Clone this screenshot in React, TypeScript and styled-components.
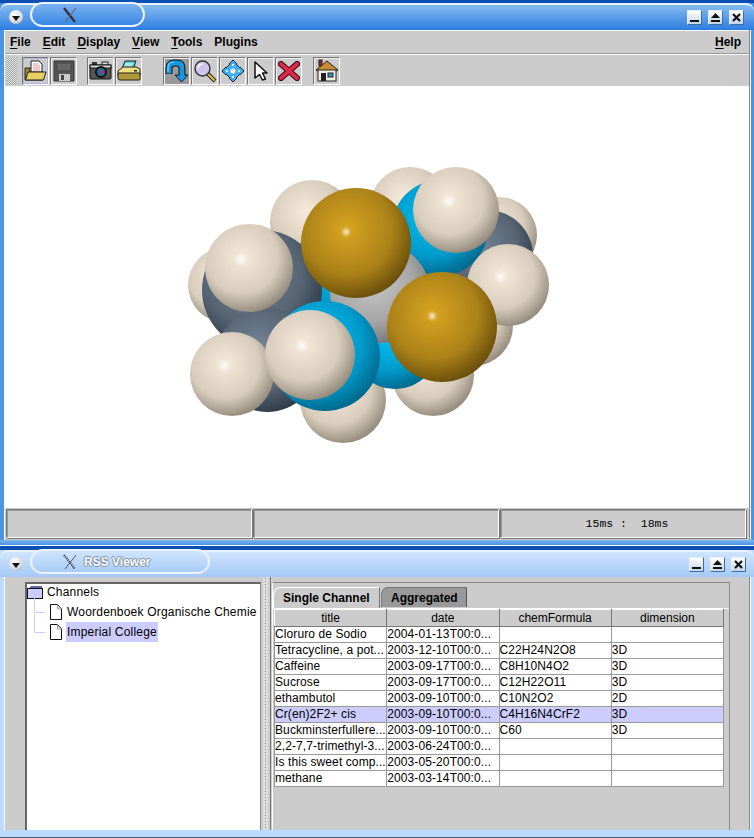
import React from "react";
import styled, { createGlobalStyle } from "styled-components";

const Global = createGlobalStyle`
  html, body { margin: 0; padding: 0; width: 754px; height: 838px; overflow: hidden; background: #1a60c8; }
  * { box-sizing: border-box; }
`;

const Page = styled.div`
  width: 754px;
  height: 838px;
  display: flex;
  flex-direction: column;
  font-family: "Liberation Sans", Arial, sans-serif;
  color: #000;
`;

const Win = styled.div<{ $active?: boolean; $h: number }>`
  height: ${(p) => p.$h}px;
  flex: none;
  display: flex;
  flex-direction: column;
  background: ${(p) => (p.$active ? "#4a94e8" : "#bcdcff")};
  border-top: ${(p) => (p.$active ? 3 : 4)}px solid #0a50b4;
`;

const TitleBar = styled.div<{ $active?: boolean }>`
  height: 27px;
  flex: none;
  display: flex;
  align-items: center;
  padding: 0 ${(p) => (p.$active ? 10 : 8)}px 1px 9px;
  gap: 7px;
  border-top: 2px solid #e8f2fd;
  border-radius: 8px 8px 0 0;
  background: ${(p) =>
    p.$active
      ? "linear-gradient(#86bbf1, #2c7de0)"
      : "linear-gradient(#cfe5fe, #a5c9f4)"};
`;

const MenuDot = styled.div`
  width: 14px;
  height: 14px;
  border-radius: 50%;
  flex: none;
  display: flex;
  align-items: center;
  justify-content: center;
  background: radial-gradient(circle at 40% 30%, #fff, #d8d8e0 60%, #8890a0);
  &::after {
    content: "";
    border-left: 4px solid transparent;
    border-right: 4px solid transparent;
    border-top: 5px solid #111;
    margin-top: 2px;
  }
`;

const TitlePill = styled.div<{ $active?: boolean; $w: number }>`
  width: ${(p) => p.$w}px;
  height: 25px;
  margin-top: -5px;
  flex: none;
  display: flex;
  align-items: center;
  gap: 6px;
  padding-left: 30px;
  border: 2px solid #eaf3fe;
  border-radius: 13px;
  background: ${(p) =>
    p.$active
      ? "linear-gradient(#7ab2f0, #3a88e6)"
      : "linear-gradient(#cfe5fe, #a9ccf6)"};
`;

const TitleText = styled.span`
  font-size: 12px;
  font-weight: bold;
  color: #fff;
  text-shadow: 1px 0 #7d93ad, 0 1px #7d93ad, -1px 0 #7d93ad, 0 -1px #7d93ad;
`;

const WinButtons = styled.div`
  margin-left: auto;
  display: flex;
  gap: 6px;
`;

const WinButton = styled.div`
  width: 15px;
  height: 15px;
  display: flex;
  align-items: center;
  justify-content: center;
  background: linear-gradient(#fff, #c4d4e8);
  border: 1px solid #3c6ea8;
  border-top-color: #e8f0fa;
  border-left-color: #e8f0fa;
`;

const Body = styled.div`
  flex: 1;
  min-height: 0;
  display: flex;
  flex-direction: column;
  margin: 0 4px 0 4px;
  background: #ccc;
  border-left: 1px solid #fff;
  border-right: 1px solid #888;
  box-shadow: 1px 0 #fff;
`;

const MenuBar = styled.div`
  height: 24px;
  flex: none;
  display: flex;
  align-items: center;
  padding: 0 8px 0 5px;
  gap: 12px;
  border-top: 1px solid #fff;
  border-bottom: 1px solid #999;
`;

const MenuItem = styled.span<{ $right?: boolean }>`
  font-size: 12px;
  font-weight: bold;
  margin-left: ${(p) => (p.$right ? "auto" : 0)};
  u { text-underline-offset: 2px; }
`;

const ToolBar = styled.div`
  height: 32px;
  flex: none;
  display: flex;
  align-items: center;
  padding-left: 2px;
  border-top: 1px solid #fff;
`;

const Grip = styled.div`
  width: 10px;
  height: 28px;
  margin-right: 5px;
  flex: none;
  background: repeating-conic-gradient(#a4a4a4 0 25%, #e4e4e4 0 50%) 0 0 / 2px 2px;
`;

const ToolGroup = styled.div<{ $after: number }>`
  display: flex;
  gap: 1px;
  margin-right: ${(p) => p.$after}px;
`;

const ToolButton = styled.div<{ $pressed?: boolean; $focus?: boolean }>`
  width: 27px;
  height: 28px;
  flex: none;
  display: flex;
  align-items: center;
  justify-content: center;
  background: ${(p) => (p.$pressed ? "#999" : "#ccc")};
  border: 1px solid #777;
  border-right-color: #fff;
  border-bottom-color: #fff;
  box-shadow: ${(p) => (p.$focus ? "inset 0 0 0 1px #b4b4e0" : "inset 1px 1px #eee")};
`;

const Canvas = styled.div`
  flex: 1;
  min-height: 0;
  background: #fff;
  display: flex;
  align-items: flex-start;
  justify-content: center;
  overflow: hidden;
`;

const StatusBar = styled.div`
  height: 32px;
  flex: none;
  display: grid;
  grid-template-columns: 246px 246px 246px;
  gap: 1px;
  padding: 1px 0 2px 1px;
`;

const StatusCell = styled.div`
  border: 1px solid #777;
  border-right-color: #fff;
  border-bottom-color: #fff;
  box-shadow: inset 1px 1px #999, 1px 1px #777;
  display: flex;
  align-items: center;
  justify-content: center;
  font-family: "Liberation Mono", monospace;
  font-size: 11.5px;
  white-space: pre;
  padding-left: 8px;
`;

const Split = styled.div`
  flex: 1;
  min-height: 0;
  display: flex;
  padding-left: 20px;
  padding-top: 5px;
`;

const Tree = styled.div`
  width: 236px;
  flex: none;
  background: #fff;
  border: 2px solid #666;
  border-right: 1px solid #888;
  border-bottom: none;
  font-size: 12px;
`;

const TreeRow = styled.div<{ $depth: number }>`
  height: 20px;
  display: flex;
  align-items: center;
  gap: 3px;
  padding-left: ${(p) => p.$depth}px;
  position: relative;
  &:first-child { margin-top: -2px; }
  svg { flex: none; }
`;

const TreeLine = styled.div`
  position: absolute;
  left: 7px;
  top: -8px;
  width: 11px;
  height: 19px;
  border-left: 1px solid #ccf;
  border-bottom: 1px solid #ccf;
`;

const TreeLabel = styled.span<{ $selected?: boolean }>`
  padding: 3px 1px;
  letter-spacing: 0.2px;
  background: ${(p) => (p.$selected ? "#ccccff" : "transparent")};
  white-space: nowrap;
`;

const Splitter = styled.div`
  width: 10px;
  flex: none;
  margin: -5px 0 0 0;
  border-right: 1px solid #777;
  background-image: radial-gradient(#888 0.7px, #ddd 0.8px);
  background-size: 3px 3px;
  background-clip: content-box;
  padding: 0 2px;
`;

const TabArea = styled.div`
  width: 458px;
  flex: none;
  margin-left: 1px;
  border-top: 1px solid #888;
  border-left: 1px solid #fff;
  border-right: 1px solid #888;
  padding-top: 4px;
  display: flex;
  flex-direction: column;
`;

const Tabs = styled.div`
  display: flex;
  height: 21px;
  flex: none;
  gap: 1px;
`;

const Tab = styled.div<{ $active?: boolean }>`
  height: ${(p) => (p.$active ? 21 : 20)}px;
  width: ${(p) => (p.$active ? 107 : 86)}px;
  padding: 2px 0 0 9px;
  font-size: 12px;
  font-weight: bold;
  line-height: 16px;
  white-space: nowrap;
  background: ${(p) => (p.$active ? "#ccc" : "#999")};
  border-top: 1px solid ${(p) => (p.$active ? "#fff" : "#777")};
  border-left: 1px solid ${(p) => (p.$active ? "#fff" : "#777")};
  border-right: 1px solid ${(p) => (p.$active ? "#777" : "#555")};
  border-top-left-radius: 7px 8px;
`;

const TablePane = styled.div`
  flex: 1;
  min-height: 0;
  border-top: 1px solid #fff;
  padding: 0 3px 0 1px;
`;

const Table = styled.table`
  border-collapse: collapse;
  table-layout: fixed;
  width: 450px;
  font-size: 12px;
  letter-spacing: 0.1px;
`;

const Th = styled.th`
  height: 17px;
  padding: 0;
  background: #ccc;
  font-weight: normal;
  text-align: center;
  letter-spacing: 0;
  border-top: 1px solid #fff;
  border-left: 1px solid #fff;
  border-right: 1px solid #777;
  border-bottom: 1px solid #777;
`;

const Td = styled.td<{ $selected?: boolean }>`
  height: 16px;
  padding: 0;
  background: ${(p) => (p.$selected ? "#ccccff" : "#fff")};
  border: 1px solid #999;
  white-space: nowrap;
  overflow: hidden;
  line-height: 13px;
`;

const BottomBand = styled.div<{ $active?: boolean }>`
  height: ${(p) => (p.$active ? 6 : 8)}px;
  flex: none;
  background: ${(p) => (p.$active ? "linear-gradient(#7ab4f0, #4a94e8)" : "#bcdcff")};
  border-bottom: 1px solid ${(p) => (p.$active ? "#fff" : "#46586c")};
`;

const Minimize = () => (
  <svg width="11" height="11" viewBox="0 0 11 11"><rect x="1" y="8" width="9" height="2" fill="#111" /></svg>
);
const Maximize = () => (
  <svg width="11" height="11" viewBox="0 0 11 11"><path d="M5.5 1 L10 6 H1 Z" fill="#111" /><rect x="1" y="8" width="9" height="2" fill="#111" /></svg>
);
const CloseX = () => (
  <svg width="11" height="11" viewBox="0 0 11 11"><path d="M2 2 L9 9 M9 2 L2 9" stroke="#111" strokeWidth="2.2" /></svg>
);

const XLogo = ({ hatch }: { hatch?: boolean }) => (
  <svg width="16" height="16" viewBox="0 0 16 16">
    <path d="M2 1 L13 15" stroke={hatch ? "#222" : "#333"} strokeWidth={hatch ? 2 : 2.4} strokeDasharray={hatch ? "1 1" : undefined} fill="none" />
    <path d="M14 1 L3 15" stroke={hatch ? "#555" : "#666"} strokeWidth={hatch ? 1 : 1.2} fill="none" />
  </svg>
);

const OpenIcon = () => (
  <svg width="23" height="22" viewBox="0 0 23 22">
    <path d="M7 1 H15 L18 4 V13 H7 Z" fill="#fff" stroke="#222" />
    <path d="M9 4h5M9 6h7M9 8h7M9 10h7" stroke="#e89090" />
    <path d="M1 8 H6 V12 H19 V20 H1 Z" fill="#a08828" stroke="#222" />
    <path d="M1.5 20 L4 12 H22 L19.5 20 Z" fill="#e6cf60" stroke="#222" />
  </svg>
);
const SaveIcon = () => (
  <svg width="22" height="22" viewBox="0 0 22 22">
    <path d="M1 1 H21 V21 H1 Z" fill="#555" stroke="#333" />
    <rect x="4" y="3" width="14" height="8" fill="#666" stroke="#444" />
    <rect x="6" y="14" width="11" height="7" fill="#ccc" />
    <rect x="8" y="15" width="3" height="5" fill="#444" />
  </svg>
);
const CameraIcon = () => (
  <svg width="23" height="20" viewBox="0 0 23 20">
    <rect x="3" y="1" width="5" height="3" fill="#333" />
    <rect x="13" y="1" width="6" height="4" fill="#ddd" stroke="#222" />
    <rect x="1" y="4" width="21" height="14" rx="1" fill="#555" stroke="#111" />
    <rect x="1" y="4" width="21" height="3" fill="#ddd" stroke="#111" />
    <circle cx="12" cy="11" r="6" fill="#111" />
    <circle cx="12" cy="11" r="4" fill="#207088" />
    <circle cx="13" cy="11" r="2" fill="#a030a0" />
  </svg>
);
const PrintIcon = () => (
  <svg width="24" height="22" viewBox="0 0 24 22">
    <path d="M8 1 H19 L16 9 H5 Z" fill="#50d0d8" stroke="#222" />
    <path d="M8 4 h8 M7 6 h8" stroke="#fff" />
    <path d="M1 11 L6 7 H19 L23 9 V16 H1 Z" fill="#f0e080" stroke="#222" />
    <path d="M1 13 H23 V19 Q23 20 22 20 H3 Q1 20 1 18 Z" fill="#b09838" stroke="#222" />
    <rect x="17" y="10" width="3" height="1.5" fill="#222" />
  </svg>
);
const RotateIcon = () => (
  <svg width="25" height="24" viewBox="0 0 25 24">
    <path d="M5 15 V9 Q5 4 11 4 H13 Q18 4 18 9 V16" fill="none" stroke="#10181f" strokeWidth="7" />
    <path d="M11 16 H24 L17.5 23 Z" fill="#1898e0" stroke="#10181f" strokeLinejoin="round" />
    <path d="M5 14.5 V9 Q5 4 11 4 H13 Q18 4 18 9 V17" fill="none" stroke="#1898e0" strokeWidth="4.8" />
    <path d="M4 13 V9 Q4 3 10 3" fill="none" stroke="#80d0ff" strokeWidth="1.2" />
  </svg>
);
const ZoomIcon = () => (
  <svg width="24" height="24" viewBox="0 0 24 24">
    <path d="M14 14 L22 22" stroke="#222" strokeWidth="4" />
    <path d="M14.5 14.5 L21.5 21.5" stroke="#e0c040" strokeWidth="2.2" />
    <circle cx="9.5" cy="9.5" r="7.5" fill="#cfc4f0" stroke="#333" strokeWidth="1.4" />
    <path d="M5 9 Q6 5 10 5" stroke="#fff" strokeWidth="1.6" fill="none" />
  </svg>
);
const MoveIcon = () => (
  <svg width="24" height="24" viewBox="0 0 24 24">
    <path d="M12 1 L16 5 H15 L19 9 V8 L23 12 L19 16 V15 L15 19 H16 L12 23 L8 19 H9 L5 15 V16 L1 12 L5 8 V9 L9 5 H8 Z" fill="#40b0f0" stroke="#18242c" strokeLinejoin="round" />
    <circle cx="12" cy="12" r="2.5" fill="#fff" />
    <path d="M12 5v2M12 17v2M5 12h2M17 12h2" stroke="#fff" strokeWidth="1.6" />
  </svg>
);
const ArrowIcon = () => (
  <svg width="16" height="20" viewBox="0 0 16 20">
    <path d="M2 1 L14 12 H9.5 L12.5 18 L9.5 19 L6.5 13.5 L2 17 Z" fill="#fff" stroke="#111" strokeWidth="1.5" strokeLinejoin="round" />
  </svg>
);
const DeleteIcon = () => (
  <svg width="22" height="20" viewBox="0 0 22 20">
    <path d="M3 3 L19 17 M19 3 L3 17" stroke="#33090f" strokeWidth="6" strokeLinecap="round" />
    <path d="M3 3 L19 17 M19 3 L3 17" stroke="#e02848" strokeWidth="4" strokeLinecap="round" />
  </svg>
);
const HomeIcon = () => (
  <svg width="24" height="23" viewBox="0 0 24 23">
    <rect x="4" y="1" width="3" height="6" fill="#a02828" stroke="#222" />
    <path d="M1 11 L12 2 L23 11 L21 12 H3 Z" fill="#c88a30" stroke="#222" />
    <rect x="3" y="11" width="18" height="11" fill="#f4f0e0" stroke="#222" />
    <rect x="6" y="14" width="5" height="8" fill="#222" />
    <rect x="13" y="14" width="5" height="4" fill="#3090d0" stroke="#222" />
  </svg>
);

const FolderIcon = () => (
  <svg width="16" height="14" viewBox="0 0 16 14">
    <path d="M4 1 H15 V3 H2 Z" fill="#666699" />
    <rect x="0.5" y="3.5" width="15" height="10" fill="#ccccff" stroke="#111" />
    <path d="M0.5 3.5 H6" stroke="#111" />
  </svg>
);
const FileIcon = () => (
  <svg width="14" height="16" viewBox="0 0 14 16">
    <path d="M1.5 0.5 H8.5 L12.5 5 V15.5 H1.5 Z" fill="#fff" stroke="#111" />
    <path d="M8.5 0.5 V5 H12.5" fill="none" stroke="#99c" />
  </svg>
);

type Kind = "h" | "c" | "n" | "m" | "s";
const atoms: { k: Kind; x: number; y: number; r: number; spec?: boolean }[] = [
  { k: "h", x: 343, y: 400, r: 43 },
  { k: "h", x: 312, y: 222, r: 42 },
  { k: "h", x: 410, y: 207, r: 40 },
  { k: "h", x: 499, y: 235, r: 38 },
  { k: "h", x: 226, y: 285, r: 38 },
  { k: "h", x: 473, y: 326, r: 40 },
  { k: "h", x: 433, y: 375, r: 41 },
  { k: "n", x: 345, y: 270, r: 52 },
  { k: "c", x: 262, y: 290, r: 60 },
  { k: "c", x: 487, y: 256, r: 46 },
  { k: "n", x: 395, y: 345, r: 44 },
  { k: "n", x: 440, y: 228, r: 48 },
  { k: "m", x: 380, y: 293, r: 50 },
  { k: "c", x: 267, y: 360, r: 52, spec: true },
  { k: "n", x: 325, y: 356, r: 55 },
  { k: "h", x: 456, y: 210, r: 43, spec: true },
  { k: "h", x: 249, y: 268, r: 44, spec: true },
  { k: "h", x: 232, y: 374, r: 42, spec: true },
  { k: "h", x: 310, y: 355, r: 45, spec: true },
  { k: "h", x: 508, y: 285, r: 41, spec: true },
  { k: "s", x: 356, y: 243, r: 55, spec: true },
  { k: "s", x: 442, y: 327, r: 55, spec: true },
];

const shades: Record<Kind, [string, string, string]> = {
  h: ["#f6eadb", "#d8cdbc", "#877e70"],
  c: ["#748494", "#566474", "#2a3440"],
  n: ["#00c0f4", "#009bcc", "#005f80"],
  m: ["#c8c8c8", "#a6a6a6", "#707070"],
  s: ["#d8a520", "#ab8118", "#5e4609"],
};

const Molecule = () => (
  <svg width="744" height="422" viewBox="5 86 744 422">
    <defs>
      {(Object.keys(shades) as Kind[]).map((k) => (
        <radialGradient key={k} id={`atom-${k}`} cx="0.42" cy="0.38" r="0.68">
          <stop offset="0" stopColor={shades[k][0]} />
          <stop offset="0.6" stopColor={shades[k][1]} />
          <stop offset="1" stopColor={shades[k][2]} />
        </radialGradient>
      ))}
      <radialGradient id="atom-spec">
        <stop offset="0" stopColor="#fff" stopOpacity="0.75" />
        <stop offset="1" stopColor="#fff" stopOpacity="0" />
      </radialGradient>
    </defs>
    {atoms.map((a, i) => (
      <g key={i}>
        <circle cx={a.x} cy={a.y} r={a.r} fill={`url(#atom-${a.k})`} />
        {a.spec && (
          <circle cx={a.x - a.r * 0.18} cy={a.y - a.r * 0.2} r={a.k === "h" ? 7 : 5.5} fill="url(#atom-spec)" />
        )}
      </g>
    ))}
  </svg>
);

const rows = [
  ["Cloruro de Sodio", "2004-01-13T00:0...", "", ""],
  ["Tetracycline, a pot...", "2003-12-10T00:0...", "C22H24N2O8", "3D"],
  ["Caffeine", "2003-09-17T00:0...", "C8H10N4O2", "3D"],
  ["Sucrose", "2003-09-17T00:0...", "C12H22O11", "3D"],
  ["ethambutol", "2003-09-10T00:0...", "C10N2O2", "2D"],
  ["Cr(en)2F2+ cis", "2003-09-10T00:0...", "C4H16N4CrF2", "3D"],
  ["Buckminsterfullere...", "2003-09-10T00:0...", "C60", "3D"],
  ["2,2-7,7-trimethyl-3...", "2003-06-24T00:0...", "", ""],
  ["Is this sweet comp...", "2003-05-20T00:0...", "", ""],
  ["methane", "2003-03-14T00:0...", "", ""],
];

const menus = ["File", "Edit", "Display", "View", "Tools", "Plugins"];

export default function App() {
  return (
    <Page>
      <Global />
      <Win $active $h={546}>
        <TitleBar $active>
          <MenuDot />
          <TitlePill $active $w={115}><XLogo /></TitlePill>
          <WinButtons>
            <WinButton><Minimize /></WinButton>
            <WinButton><Maximize /></WinButton>
            <WinButton><CloseX /></WinButton>
          </WinButtons>
        </TitleBar>
        <Body>
          <MenuBar>
            {menus.map((m) => (
              <MenuItem key={m}>{m === "Plugins" ? m : <><u>{m[0]}</u>{m.slice(1)}</>}</MenuItem>
            ))}
            <MenuItem $right><u>H</u>elp</MenuItem>
          </MenuBar>
          <ToolBar>
            <Grip />
            <ToolGroup $after={10}>
              <ToolButton $focus><OpenIcon /></ToolButton>
              <ToolButton><SaveIcon /></ToolButton>
            </ToolGroup>
            <ToolGroup $after={21}>
              <ToolButton><CameraIcon /></ToolButton>
              <ToolButton><PrintIcon /></ToolButton>
            </ToolGroup>
            <ToolGroup $after={11}>
              <ToolButton $pressed><RotateIcon /></ToolButton>
              <ToolButton><ZoomIcon /></ToolButton>
              <ToolButton><MoveIcon /></ToolButton>
              <ToolButton><ArrowIcon /></ToolButton>
              <ToolButton><DeleteIcon /></ToolButton>
            </ToolGroup>
            <ToolGroup $after={0}>
              <ToolButton><HomeIcon /></ToolButton>
            </ToolGroup>
          </ToolBar>
          <Canvas><Molecule /></Canvas>
          <StatusBar>
            <StatusCell />
            <StatusCell />
            <StatusCell>{"15ms :  18ms"}</StatusCell>
          </StatusBar>
        </Body>
        <BottomBand $active />
      </Win>
      <Win $h={292}>
        <TitleBar>
          <MenuDot />
          <TitlePill $w={180}><XLogo hatch /><TitleText>RSS Viewer</TitleText></TitlePill>
          <WinButtons>
            <WinButton><Minimize /></WinButton>
            <WinButton><Maximize /></WinButton>
            <WinButton><CloseX /></WinButton>
          </WinButtons>
        </TitleBar>
        <Body>
          <Split>
            <Tree>
              <TreeRow $depth={0}><FolderIcon /><TreeLabel>Channels</TreeLabel></TreeRow>
              <TreeRow $depth={22}><TreeLine /><FileIcon /><TreeLabel>Woordenboek Organische Chemie</TreeLabel></TreeRow>
              <TreeRow $depth={22}><TreeLine /><FileIcon /><TreeLabel $selected>Imperial College</TreeLabel></TreeRow>
            </Tree>
            <Splitter />
            <TabArea>
              <Tabs>
                <Tab $active>Single Channel</Tab>
                <Tab>Aggregated</Tab>
              </Tabs>
              <TablePane>
                <Table>
                  <thead>
                    <tr>
                      <Th>title</Th>
                      <Th>date</Th>
                      <Th>chemFormula</Th>
                      <Th>dimension</Th>
                    </tr>
                  </thead>
                  <tbody>
                    {rows.map((r, i) => (
                      <tr key={i}>
                        {r.map((c, j) => (
                          <Td key={j} $selected={i === 5}>{c}</Td>
                        ))}
                      </tr>
                    ))}
                  </tbody>
                </Table>
              </TablePane>
            </TabArea>
          </Split>
        </Body>
        <BottomBand />
      </Win>
    </Page>
  );
}
